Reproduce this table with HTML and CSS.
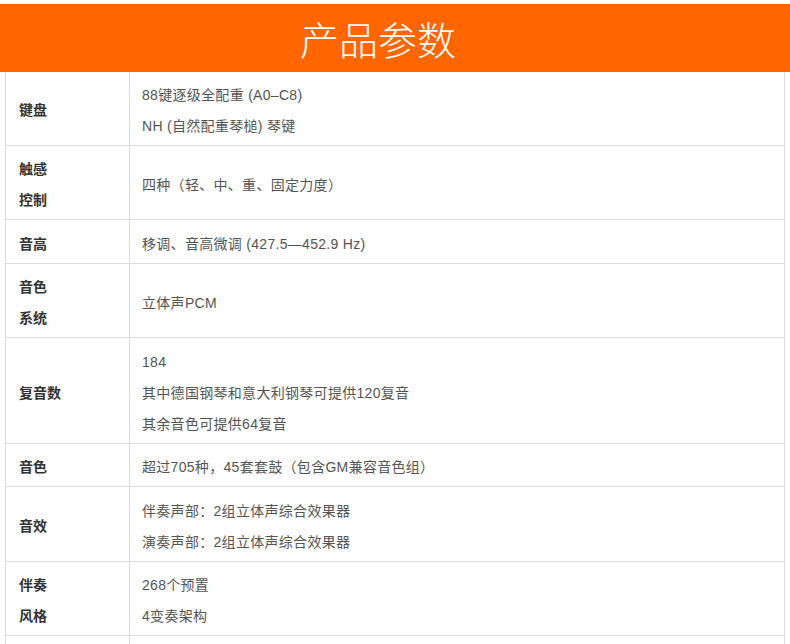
FILE: index.html
```html
<!DOCTYPE html>
<html lang="zh-CN">
<head>
<meta charset="utf-8">
<title>产品参数</title>
<link rel="stylesheet" href="styles.css">
</head>
<body>
<header class="banner"><h1 class="banner-title">产品参数</h1></header>
<div class="spec">
  <div class="row"><div class="label">键盘</div><div class="value"><p>88键逐级全配重 (A0–C8)</p><p>NH (自然配重琴槌) 琴键</p></div></div>
  <div class="row"><div class="label"><p>触感</p><p>控制</p></div><div class="value"><p>四种（轻、中、重、固定力度）</p></div></div>
  <div class="row"><div class="label">音高</div><div class="value"><p>移调、音高微调 (427.5—452.9 Hz)</p></div></div>
  <div class="row"><div class="label"><p>音色</p><p>系统</p></div><div class="value"><p>立体声PCM</p></div></div>
  <div class="row"><div class="label">复音数</div><div class="value"><p>184</p><p>其中德国钢琴和意大利钢琴可提供120复音</p><p>其余音色可提供64复音</p></div></div>
  <div class="row"><div class="label">音色</div><div class="value"><p>超过705种，45套套鼓（包含GM兼容音色组）</p></div></div>
  <div class="row"><div class="label">音效</div><div class="value"><p>伴奏声部：2组立体声综合效果器</p><p>演奏声部：2组立体声综合效果器</p></div></div>
  <div class="row"><div class="label"><p>伴奏</p><p>风格</p></div><div class="value"><p>268个预置</p><p>4变奏架构</p></div></div>
  <div class="row"><div class="label">&nbsp;</div><div class="value"><p>&nbsp;</p></div></div>
</div>
</body>
</html>
```

FILE: styles.css
```css
html, body {
  margin: 0;
  padding: 0;
  background: #fff;
}
body {
  font-family: "Liberation Sans", "Noto Sans CJK SC", sans-serif;
  font-size: 14px;
  color: #555;
}
.banner {
  margin-top: 4px;
  height: 68px;
  background: #ff6600;
  display: flex;
  align-items: center;
  justify-content: center;
  padding-right: 34px;
}
.banner-title {
  margin: 0;
  font-family: "Noto Sans CJK SC", sans-serif;
  font-weight: 300;
  font-size: 39px;
  line-height: 1;
  color: #fff;
}
.spec {
  margin: 0 5px;
  border-left: 1px solid #ddd;
  border-right: 1px solid #ddd;
}
.row {
  display: grid;
  grid-template-columns: 124px 1fr;
  border-bottom: 1px solid #ddd;
}
.label,
.value {
  padding-top: 8.5px;
  padding-bottom: 3px;
  display: flex;
  flex-direction: column;
  justify-content: center;
  line-height: 31px;
}
.row:first-child .label,
.row:first-child .value {
  padding-top: 7.5px;
}
.label {
  border-right: 1px solid #ddd;
  padding-left: 13px;
  font-weight: bold;
  color: #333;
}
.value {
  padding-left: 12px;
  letter-spacing: 0.3px;
}
p {
  margin: 0;
}
```
